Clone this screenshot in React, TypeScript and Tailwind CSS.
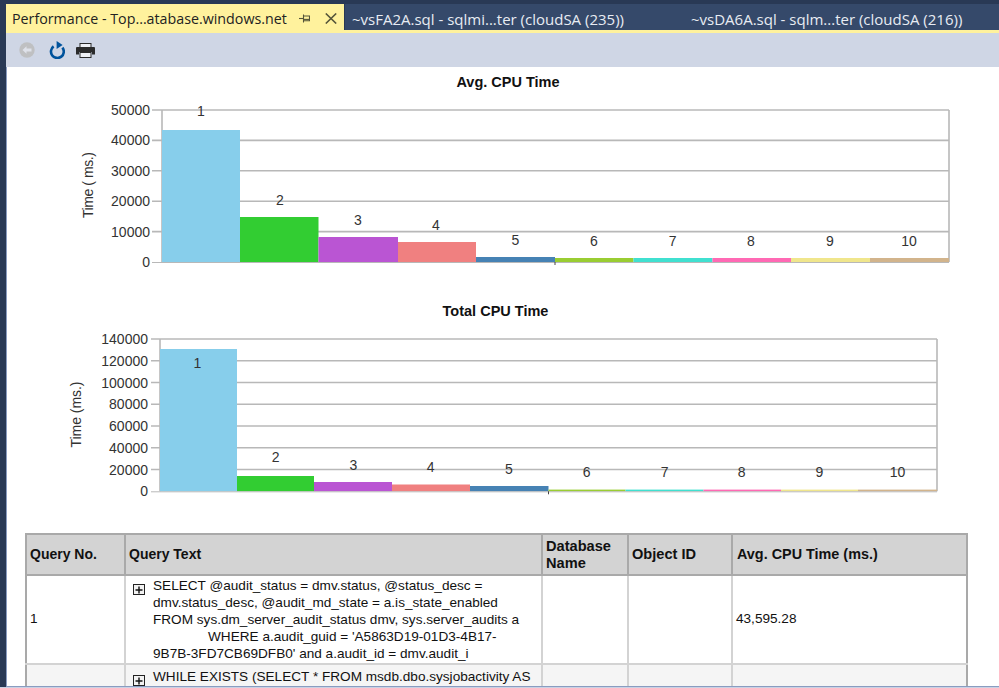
const ARIAL = "font-['Liberation_Sans',Arial,sans-serif]";

type Bar = { x0: number; x1: number; top: number; fill: string; label: string; lx: number; ly: number };
const COLORS = ["#87ceeb", "#32cd32", "#ba55d3", "#f08080", "#4682b4", "#9acd32", "#40e0d0", "#ff69b4", "#f0e68c", "#d2b48c"];

function makeBars(edges: number[], tops: number[], lx: number[], ly: number[]): Bar[] {
  return tops.map((top, i) => ({
    x0: edges[i],
    x1: edges[i + 1],
    top,
    fill: COLORS[i],
    label: String(i + 1),
    lx: lx[i],
    ly: ly[i],
  }));
}

function Chart(props: {
  vy: number;
  vh: number;
  title: string;
  titleX: number;
  titleY: number;
  left: number;
  right: number;
  top: number;
  bottom: number;
  ticks: string[];
  labelRight: number;
  tickLeft: number;
  axisTitle: string;
  axisX: number;
  axisY: number;
  bars: Bar[];
  notchX: number;
}) {
  const { vy, vh, title, titleX, titleY, left, right, top, bottom, ticks, labelRight, tickLeft, axisTitle, axisX, axisY, bars, notchX } = props;
  const step = (bottom - top) / (ticks.length - 1);
  return (
    <svg className="block w-[992px] shrink-0" style={{ height: vh }} viewBox={`7 ${vy} 992 ${vh}`} fontFamily="'Liberation Sans', Arial, sans-serif">
      <text x={titleX} y={titleY} textAnchor="middle" fontSize="14.5" fontWeight="700" fill="#111">
        {title}
      </text>
      {ticks.map((t, i) => {
        const y = bottom - step * i;
        return (
          <g key={t}>
            {i > 0 && <line x1={tickLeft} x2={right} y1={y} y2={y} stroke="#b8b8b8" strokeWidth="1.6" />}
            <text x={labelRight} y={y + 5} textAnchor="end" fontSize="14" fill="#333">
              {t}
            </text>
          </g>
        );
      })}
      <line x1={left} x2={left} y1={top} y2={bottom} stroke="#b8b8b8" strokeWidth="1.6" />
      <line x1={right} x2={right} y1={top} y2={bottom} stroke="#b8b8b8" strokeWidth="1.6" />
      <text transform={`translate(${axisX} ${axisY}) rotate(-90)`} textAnchor="middle" fontSize="14" fill="#333" textLength={66} lengthAdjust="spacing">
        {axisTitle}
      </text>
      {bars.map((b) => (
        <rect key={b.label} x={b.x0} y={b.top} width={b.x1 - b.x0} height={bottom - b.top} fill={b.fill} />
      ))}
      <line x1={tickLeft} x2={right} y1={bottom + 0.5} y2={bottom + 0.5} stroke="#b8b8b8" strokeWidth="1" />
      <line x1={notchX} x2={notchX} y1={bottom} y2={bottom + 3} stroke="#444" strokeWidth="1" />
      {bars.map((b) => (
        <text key={b.label} x={b.lx} y={b.ly + 5} textAnchor="middle" fontSize="14" fill="#333">
          {b.label}
        </text>
      ))}
    </svg>
  );
}

function BackIcon() {
  return (
    <svg width="16" height="16" viewBox="0 0 16 16">
      <circle cx="8" cy="8" r="7.7" fill="#bfc0c2" />
      <path d="M3.5 8 L7.5 4.2 V6.6 H12.5 V9.4 H7.5 V11.8 Z" fill="#dfe2ea" />
    </svg>
  );
}
function RefreshIcon() {
  return (
    <svg width="16" height="18" viewBox="0 0 16 18" fill="none">
      <path d="M4.6 5.4 A6.4 6.4 0 1 0 13.4 6.6" stroke="#00539c" strokeWidth="2.6" />
      <path d="M7.6 0 L13.6 4 L7.6 8 Z" fill="#00539c" />
    </svg>
  );
}
function PrinterIcon() {
  return (
    <svg width="19" height="15" viewBox="0 0 19 15">
      <rect x="4" y="0.5" width="11" height="4" fill="#eef0f4" stroke="#2b2b2b" />
      <path d="M1 4 H18 a1 1 0 0 1 1 1 V11.5 H16 V9 H3 V11.5 H0 V5 a1 1 0 0 1 1-1 Z" fill="#2b2b2b" />
      <rect x="4" y="9.5" width="11" height="5" fill="#eef0f4" stroke="#2b2b2b" />
    </svg>
  );
}
function PinIcon() {
  return (
    <svg width="11" height="9" viewBox="0 0 11 9" fill="none" stroke="#55553a" strokeWidth="1.1">
      <path d="M0 4.5 H4" />
      <path d="M4.5 0.5 V8.5" />
      <path d="M4.5 2 H10.5 V6.8 H4.5" />
      <path d="M4.5 5.4 H10.5" />
    </svg>
  );
}
function CloseIcon() {
  return (
    <svg width="12" height="11" viewBox="0 0 12 11" fill="none" stroke="#55553a" strokeWidth="1.6">
      <path d="M0.8 0.5 L11.2 10.5 M11.2 0.5 L0.8 10.5" />
    </svg>
  );
}
function Expand() {
  return (
    <span className="mt-[7px] flex h-[11px] w-[12px] shrink-0 items-center justify-center border border-[#222] bg-[#f2f2f2]">
      <svg width="8" height="8" viewBox="0 0 8 8">
        <path d="M0.5 4 H7.5 M4 0.5 V7.5" stroke="#111" strokeWidth="1.4" />
      </svg>
    </span>
  );
}

const bars1 = makeBars(
  [162, 240, 318.5, 398, 476, 555, 633.5, 712.5, 791, 870, 949],
  [130, 217, 237, 242, 257, 258, 258, 258, 258, 258],
  [201, 280, 358, 436, 515.5, 594, 672.6, 751, 830, 909],
  [111, 200, 220, 225, 239.5, 240.5, 240.5, 240.5, 240.5, 240.5],
);
const bars2 = makeBars(
  [160, 237, 314, 392, 470, 548.5, 625.5, 703.5, 781, 858, 937],
  [349, 476, 482, 484.5, 486, 489.6, 489.6, 489.6, 489.6, 489.6],
  [197.5, 275.7, 353.5, 430.7, 509, 586.7, 664.7, 741.7, 819.5, 897.5],
  [362.7, 457, 465, 467, 468.7, 472, 472, 472, 472, 472],
);

const th = "border-2 border-[#a9a9a9] bg-[#d3d3d3] px-[3px] text-left align-middle font-bold leading-[17px] text-[#111] text-[14px]";
const thWide = "border-2 border-[#a9a9a9] bg-[#d3d3d3] px-[3px] text-left align-middle font-bold leading-[17px] text-[#111] text-[14.6px]";
const thAvg = "border-2 border-[#a9a9a9] bg-[#d3d3d3] pl-[4px] pr-[3px] text-left align-middle font-bold leading-[17px] text-[#111] text-[14.4px]";
const td = "border-2 border-[#d3d3d3] px-[3px] align-middle text-[#111]";
const tdFirst = "border-2 border-[#d3d3d3] border-l-[#a9a9a9] px-[3px] align-middle text-[#111]";
const tdLast = "border-2 border-[#d3d3d3] border-r-[#a9a9a9] px-[3px] align-middle text-[#111]";

export default function App() {
  return (
    <div className="flex h-[688px] w-[999px] flex-col overflow-hidden bg-[#293955]">
      <div className="flex h-[30px] shrink-0 items-start pl-[6px] pt-[4px] font-['Open_Sans',sans-serif]">
        <div className="flex h-[26px] w-[338px] shrink-0 items-start bg-[#fff29d] pl-[6px] text-[14.25px] leading-[20px] text-[#222]">
          <span className="mt-[5px] whitespace-nowrap">Performance - Top...atabase.windows.net</span>
          <span className="ml-auto mr-[7px] mt-[9px] flex items-start gap-[15px]">
            <span className="mt-px">
              <PinIcon />
            </span>
            <CloseIcon />
          </span>
        </div>
        <div className="ml-px flex h-[26px] w-[339px] shrink-0 items-start bg-[#35496a] pl-[7px] text-[15px] leading-[20px] text-[#e8ecf3]">
          <span className="mt-[5px] whitespace-nowrap">~vsFA2A.sql - sqlmi...ter (cloudSA (235))</span>
        </div>
        <div className="flex h-[26px] flex-1 items-start bg-[#35496a] pl-[7px] text-[15px] leading-[20px] text-[#e8ecf3]">
          <span className="mt-[5px] whitespace-nowrap">~vsDA6A.sql - sqlm...ter (cloudSA (216))</span>
        </div>
      </div>
      <div className="ml-[6px] h-[3px] shrink-0 bg-[#fff29d]" />
      <div className="ml-[6px] flex h-[34px] shrink-0 items-center bg-[#cfd6e5] pl-[13px]">
        <BackIcon />
        <span className="ml-[14px]">
          <RefreshIcon />
        </span>
        <span className="ml-[11px]">
          <PrinterIcon />
        </span>
      </div>
      <div className={`ml-[6px] flex min-h-0 flex-1 flex-col overflow-hidden border-b border-l border-[#8a9cc0] bg-white ${ARIAL}`}>
        <Chart
          vy={67}
          vh={233}
          title="Avg. CPU Time"
          titleX={508}
          titleY={87}
          left={162}
          right={949}
          top={110}
          bottom={262}
          ticks={["0", "10000", "20000", "30000", "40000", "50000"]}
          labelRight={150}
          tickLeft={152}
          axisTitle="Time ( ms.)"
          axisX={93}
          axisY={185}
          bars={bars1}
          notchX={555}
        />
        <Chart
          vy={300}
          vh={233}
          title="Total CPU Time"
          titleX={495.5}
          titleY={316}
          left={160}
          right={937}
          top={339}
          bottom={491.3}
          ticks={["0", "20000", "40000", "60000", "80000", "100000", "120000", "140000"]}
          labelRight={148}
          tickLeft={151}
          axisTitle="Time (ms.)"
          axisX={81}
          axisY={414.5}
          bars={bars2}
          notchX={548.5}
        />
        <div className="ml-[18px] shrink-0">
          <table className="w-[941px] table-fixed border-collapse text-[13.6px]">
            <colgroup>
              <col className="w-[99px]" />
              <col className="w-[417px]" />
              <col className="w-[86px]" />
              <col className="w-[104px]" />
              <col className="w-[235px]" />
            </colgroup>
            <thead>
              <tr className="h-[41px]">
                <th className={th}>Query No.</th>
                <th className={th}>Query Text</th>
                <th className={thWide}>
                  Database
                  <br />
                  Name
                </th>
                <th className={thWide}>Object ID</th>
                <th className={thAvg}>Avg. CPU Time (ms.)</th>
              </tr>
            </thead>
            <tbody>
              <tr className="h-[89px]">
                <td className={tdFirst}>1</td>
                <td className={td}>
                  <div className="flex gap-[8px] pl-[4px] leading-[17px]">
                    <Expand />
                    <div className="whitespace-nowrap">
                      SELECT @audit_status = dmv.status, @status_desc =
                      <br />
                      dmv.status_desc, @audit_md_state = a.is_state_enabled
                      <br />
                      FROM sys.dm_server_audit_status dmv, sys.server_audits a
                      <br />
                      <span className="pl-[55px]">WHERE a.audit_guid = 'A5863D19-01D3-4B17-</span>
                      <br />
                      9B7B-3FD7CB69DFB0' and a.audit_id = dmv.audit_i
                    </div>
                  </div>
                </td>
                <td className={td} />
                <td className={td} />
                <td className={tdLast}>43,595.28</td>
              </tr>
              <tr className="h-[89px] bg-[#f5f5f5]">
                <td className={tdFirst} />
                <td className={`${td} !align-top`}>
                  <div className="flex gap-[8px] pl-[4px] pt-[3px] leading-[17px]">
                    <Expand />
                    <div className="whitespace-nowrap">WHILE EXISTS (SELECT * FROM msdb.dbo.sysjobactivity AS</div>
                  </div>
                </td>
                <td className={td} />
                <td className={td} />
                <td className={tdLast} />
              </tr>
            </tbody>
          </table>
        </div>
      </div>
      <div className="h-px shrink-0 bg-[#c9d2e4]" />
    </div>
  );
}
